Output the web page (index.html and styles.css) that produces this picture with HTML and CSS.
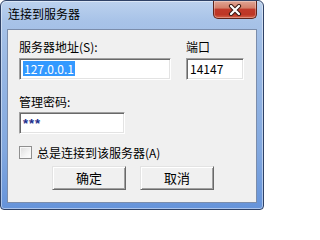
FILE: index.html
```html
<!DOCTYPE html>
<html lang="zh-CN">
<head>
<meta charset="utf-8">
<title>连接到服务器</title>
<link rel="stylesheet" href="styles.css">
</head>
<body>
<div class="window">
  <div class="titlebar">
    <div class="title">连接到服务器</div>
    <div class="close">
      <svg width="14" height="12" viewBox="0 0 14 12">
        <path d="M3 2 L11 10 M11 2 L3 10" stroke="#3b1a14" stroke-width="4.2" stroke-linecap="round"/>
        <path d="M3 2 L11 10 M11 2 L3 10" stroke="#ffffff" stroke-width="2.2" stroke-linecap="round"/>
      </svg>
    </div>
  </div>
  <div class="client">
    <div class="row top-row">
      <div class="field host">
        <div class="label">服务器地址(S):</div>
        <div class="edit wide"><span class="sel">127.0.0.1</span></div>
      </div>
      <div class="field port">
        <div class="label">端口</div>
        <div class="edit narrow"><span class="val">14147</span></div>
      </div>
    </div>
    <div class="field pass">
      <div class="label">管理密码:</div>
      <div class="edit medium"><span class="stars">***</span></div>
    </div>
    <div class="check-row">
      <div class="checkbox"></div>
      <div class="check-label">总是连接到该服务器(A)</div>
    </div>
    <div class="buttons">
      <div class="btn">确定</div>
      <div class="btn">取消</div>
    </div>
  </div>
</div>
</body>
</html>
```
FILE: styles.css
```css
html, body {
  margin: 0;
  padding: 0;
  background: #ffffff;
}
body {
  font-family: "Noto Sans CJK SC", "Noto Sans", sans-serif;
  font-size: 12px;
  color: #000;
}
.window {
  width: 264px;
  height: 210px;
  box-sizing: border-box;
  border: 1px solid #2f4266;
  border-radius: 6px 6px 4px 4px;
  background: linear-gradient(to bottom, #bcd2ee 0px, #a8c3e8 20px, #9ab9e4 60px, #82a8df 150px, #6593da 209px);
  box-shadow: inset 0 0 0 1px rgba(255,255,255,0.45);
  padding: 0 6px 6px 6px;
  display: flex;
  flex-direction: column;
}
.titlebar {
  height: 28px;
  display: flex;
  justify-content: space-between;
  align-items: flex-start;
  flex: none;
}
.title {
  margin-top: 5px;
  margin-left: 1px;
  line-height: 16px;
  font-size: 12px;
  color: #000;
}
.close {
  width: 44px;
  height: 18px;
  margin-right: 0px;
  box-sizing: border-box;
  border: 1px solid #5e241b;
  border-top: none;
  border-radius: 0 0 5px 5px;
  background: linear-gradient(to bottom, #e0a595 0%, #d3806b 40%, #c0392a 50%, #bd3625 80%, #d5634a 100%);
  box-shadow: inset 0 0 0 1px rgba(255,255,255,0.3);
  display: flex;
  align-items: center;
  justify-content: center;
}
.close svg {
  display: block;
}
.client {
  flex: 1;
  box-sizing: border-box;
  background: #f0f0f0;
  border: 1px solid #7b8dab;
  padding: 10px 0 0 11px;
  display: flex;
  flex-direction: column;
}
.row {
  display: flex;
}
.field {
  display: flex;
  flex-direction: column;
}
.port {
  margin-left: 15px;
}
.label {
  line-height: 14px;
  height: 14px;
  margin-bottom: 4px;
}
.edit {
  height: 22px;
  box-sizing: border-box;
  background: #fff;
  border-style: solid;
  border-width: 1px;
  border-color: #a0a0a0 #ffffff #ffffff #a0a0a0;
  box-shadow: inset 1px 1px 0 #696969, inset -1px -1px 0 #e3e3e3;
  padding: 2px 0 0 3px;
  line-height: 15px;
  font-size: 12px;
}
.wide { width: 152px; }
.narrow { width: 58px; }
.medium { width: 106px; }
.sel {
  background: #3399ff;
  color: #fff;
  padding: 0 1px;
  display: inline-block;
  line-height: 15px;
}
.val {
  color: #000;
}
.pass {
  margin-top: 15px;
}
.pass .label {
  margin-bottom: 3px;
}
.stars {
  color: #1b2d8a;
  font-family: "Liberation Sans", sans-serif;
  font-size: 13px;
  letter-spacing: 1px;
  font-weight: bold;
}
.check-row {
  margin-top: 12px;
  display: flex;
  align-items: center;
  height: 13px;
}
.checkbox {
  width: 13px;
  height: 13px;
  box-sizing: border-box;
  border: 1px solid #8f8f8f;
  background: linear-gradient(135deg, #dcdcdc 0%, #f4f4f4 60%, #ffffff 100%);
  box-shadow: inset 0 0 0 1px #f8f8f8;
}
.check-label {
  margin-left: 5px;
  line-height: 14px;
}
.buttons {
  margin-top: 7px;
  margin-left: 33px;
  display: flex;
  gap: 14px;
}
.btn {
  width: 74px;
  height: 24px;
  box-sizing: border-box;
  background: #f0f0f0;
  border-style: solid;
  border-width: 1px;
  border-color: #e3e3e3 #696969 #696969 #e3e3e3;
  box-shadow: inset 1px 1px 0 #ffffff, inset -1px -1px 0 #a0a0a0;
  display: flex;
  align-items: center;
  justify-content: center;
  line-height: 14px;
  font-size: 13px;
}
```
